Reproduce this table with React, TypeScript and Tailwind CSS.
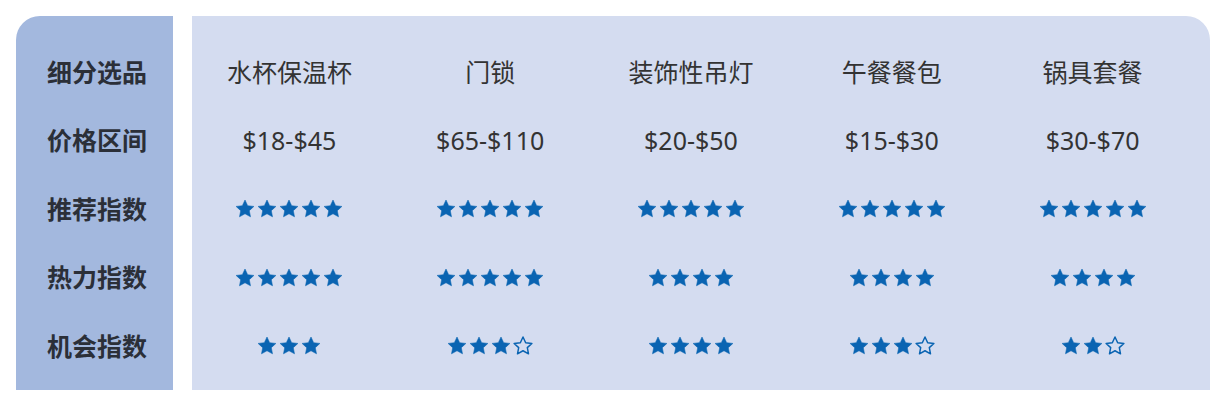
import React from "react";

type Cell = string | { filled: number; empty: number };

const LABELS = ["细分选品", "价格区间", "推荐指数", "热力指数", "机会指数"];

const ROWS: Cell[][] = [
  ["水杯保温杯", "门锁", "装饰性吊灯", "午餐餐包", "锅具套餐"],
  ["$18-$45", "$65-$110", "$20-$50", "$15-$30", "$30-$70"],
  [
    { filled: 5, empty: 0 },
    { filled: 5, empty: 0 },
    { filled: 5, empty: 0 },
    { filled: 5, empty: 0 },
    { filled: 5, empty: 0 },
  ],
  [
    { filled: 5, empty: 0 },
    { filled: 5, empty: 0 },
    { filled: 4, empty: 0 },
    { filled: 4, empty: 0 },
    { filled: 4, empty: 0 },
  ],
  [
    { filled: 3, empty: 0 },
    { filled: 3, empty: 1 },
    { filled: 4, empty: 0 },
    { filled: 3, empty: 1 },
    { filled: 2, empty: 1 },
  ],
];

const STAR =
  "M12 2.2l2.9 6.2 6.8.8-5 4.6 1.3 6.7L12 17.2l-6 3.3 1.3-6.7-5-4.6 6.8-.8z";

const Star: React.FC<{ filled: boolean }> = ({ filled }) => (
  <svg viewBox="0 0 24 24" className="h-[22px] w-[22px]">
    <path
      d={STAR}
      fill={filled ? "#0a64b2" : "none"}
      stroke="#0a64b2"
      strokeWidth={filled ? 0.6 : 1.6}
      strokeLinejoin="round"
    />
  </svg>
);

const Stars: React.FC<{ filled: number; empty: number }> = ({ filled, empty }) => (
  <div className="flex items-center justify-center">
    {Array.from({ length: filled }).map((_, i) => (
      <Star key={`f${i}`} filled />
    ))}
    {Array.from({ length: empty }).map((_, i) => (
      <Star key={`e${i}`} filled={false} />
    ))}
  </div>
);

export default function App() {
  return (
    <div
      className="h-[408px] w-[1225px] bg-white p-[16px] pr-[15px] pb-[18px] text-[#333]"
      style={{ fontFamily: '"Noto Sans", "Noto Sans CJK SC", sans-serif' }}
    >
      <div className="flex h-[374px] gap-[19px]">
        {/* Labels */}
        <div className="flex w-[157px] flex-col rounded-tl-[24px] bg-[#a3b8de] pt-[22px]">
          {LABELS.map((label) => (
            <div
              key={label}
              className="flex h-[68.5px] items-center justify-center pl-[5px] text-[25px] font-semibold text-[#2b2f38]"
            >
              {label}
            </div>
          ))}
        </div>

        {/* Data */}
        <div className="flex-1 rounded-tr-[24px] bg-[#d4dcf0] pt-[22px]">
          {ROWS.map((row, r) => (
            <div key={r} className="-ml-[3px] grid h-[68.5px] w-[1004px] grid-cols-5">
              {row.map((cell, c) => (
                <div key={c} className="flex items-center justify-center text-[25px]">
                  {typeof cell === "string" ? cell : <Stars {...cell} />}
                </div>
              ))}
            </div>
          ))}
        </div>
      </div>
    </div>
  );
}
